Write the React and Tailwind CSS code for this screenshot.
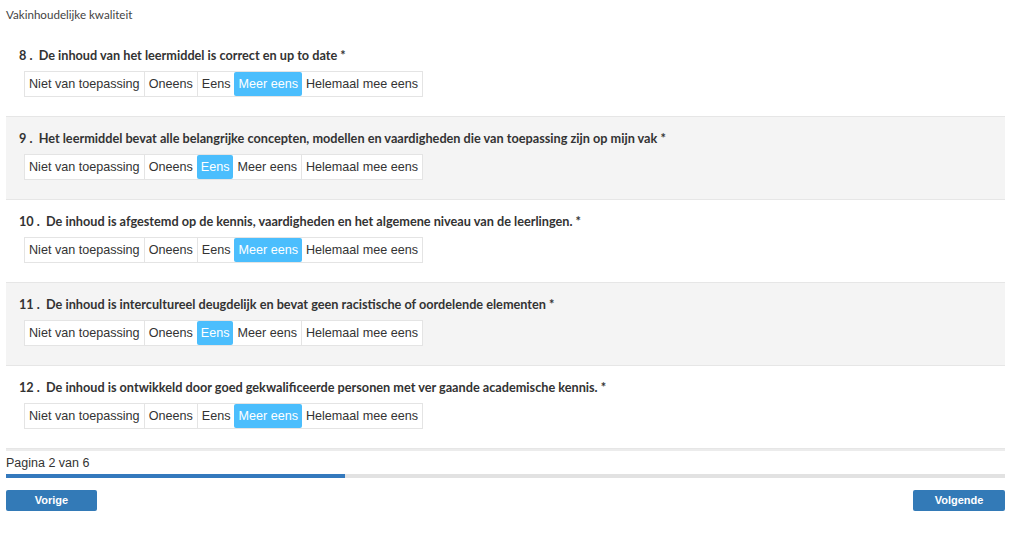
const options = ["Niet van toepassing", "Oneens", "Eens", "Meer eens", "Helemaal mee eens"]

const questions = [
  { nr: 8, text: "De inhoud van het leermiddel is correct en up to date", selected: 3 },
  {
    nr: 9,
    text: "Het leermiddel bevat alle belangrijke concepten, modellen en vaardigheden die van toepassing zijn op mijn vak",
    selected: 2,
  },
  {
    nr: 10,
    text: "De inhoud is afgestemd op de kennis, vaardigheden en het algemene niveau van de leerlingen.",
    selected: 3,
  },
  {
    nr: 11,
    text: "De inhoud is intercultureel deugdelijk en bevat geen racistische of oordelende elementen",
    selected: 2,
  },
  {
    nr: 12,
    text: "De inhoud is ontwikkeld door goed gekwalificeerde personen met ver gaande academische kennis.",
    selected: 3,
  },
]

function Question({ q, shaded }) {
  return (
    <div className={`h-[83px] border-b border-[#e6e6e6] pl-[13px] pt-[13px] ${shaded ? "bg-[#f4f4f4]" : "bg-white"}`}>
      <div className="h-[18px] flex items-center text-[12.7px] font-bold text-[#333] font-['Lato',sans-serif] whitespace-nowrap">
        {q.nr} .&nbsp; {q.text} *
      </div>
      <div className="mt-[6px] ml-[5px] inline-flex h-[26px] border border-[#e4e4e4] bg-white font-['Liberation_Sans',Arial,sans-serif] text-[12.6px] text-[#333]">
        {options.map((opt, i) => (
          <div
            key={opt}
            className={`flex items-center px-[4px] ${i > 0 ? "border-l border-[#e4e4e4]" : ""} ${
              i === q.selected ? "bg-[#4bbefd] text-white rounded-[2px] border-l-0" : ""
            } ${i === q.selected + 1 ? "border-l-0" : ""}`}
          >
            {opt}
          </div>
        ))}
      </div>
    </div>
  )
}

export default function App() {
  return (
    <div className="w-[1024px] h-[533px] bg-white overflow-hidden">
      <div className="ml-[6px] w-[999px]">
        <div className="h-[34px] pt-[6px] text-[11.6px] text-[#444] font-['Lato',sans-serif]">Vakinhoudelijke kwaliteit</div>
        <div className="border-b-2 border-[#ececec]">
          {questions.map((q, i) => (
            <Question key={q.nr} q={q} shaded={i % 2 === 1} />
          ))}
        </div>
        <div className="pt-[4px] text-[12.5px] text-[#333] leading-[16px] font-['Liberation_Sans',Arial,sans-serif]">
          Pagina 2 van 6
        </div>
        <div className="mt-[3px] h-[4px] bg-[#e2e2e2]">
          <div className="h-full w-[339px] bg-[#3479bd]" />
        </div>
        <div className="mt-[12px] flex justify-between">
          <button className="w-[91px] h-[21px] rounded-[2px] bg-[#337ab7] text-white text-[11px] font-bold font-['Liberation_Sans',Arial,sans-serif]">
            Vorige
          </button>
          <button className="w-[92px] h-[21px] rounded-[2px] bg-[#337ab7] text-white text-[11px] font-bold font-['Liberation_Sans',Arial,sans-serif]">
            Volgende
          </button>
        </div>
      </div>
    </div>
  )
}
